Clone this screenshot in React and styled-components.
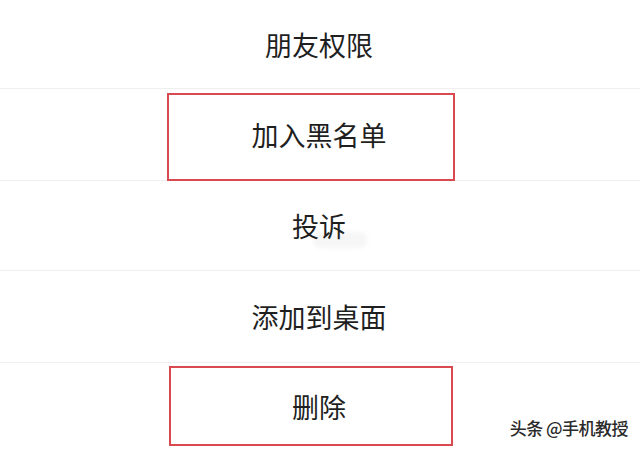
import styled, { createGlobalStyle } from "styled-components";

const GlobalStyle = createGlobalStyle`
  html, body {
    margin: 0;
    padding: 0;
    background: #ffffff;
  }
  body {
    font-family: "Noto Sans CJK SC", "Noto Sans", sans-serif;
  }
`;

const Sheet = styled.div`
  width: 640px;
  height: 450px;
  overflow: hidden;
  position: relative;
  background: #fff;
  display: flex;
  flex-direction: column;
`;

const Row = styled.div`
  position: relative;
  height: ${(p) => p.$h}px;
  flex-shrink: 0;
  display: flex;
  align-items: center;
  justify-content: center;
  border-bottom: ${(p) => (p.$last ? "none" : "1px solid #efefef")};
`;

const Label = styled.span`
  position: relative;
  z-index: 1;
  font-size: 27px;
  line-height: 1;
  color: #1f1f1f;
  margin-left: -2px;
`;

const Mark = styled.div`
  position: absolute;
  left: ${(p) => p.$left}px;
  top: ${(p) => p.$top}px;
  width: ${(p) => p.$w}px;
  height: ${(p) => p.$h}px;
  box-sizing: border-box;
  border: 2px solid #d94a50;
  pointer-events: none;
`;

const Smudge = styled.div`
  position: absolute;
  left: 313px;
  top: 51px;
  width: 54px;
  height: 16px;
  border-radius: 10px;
  background: #f6f6f6;
  filter: blur(2px);
`;

const Watermark = styled.div`
  position: absolute;
  right: 12px;
  bottom: 10px;
  font-size: 17px;
  font-weight: 500;
  color: #2a2a2a;
  letter-spacing: -0.5px;
  text-shadow: 0 0 2px #fff, 0 0 2px #fff;
`;

const items = [
  { text: "朋友权限", h: 88 },
  { text: "加入黑名单", h: 91, mark: { left: 167, top: 4, w: 288, h: 88 } },
  { text: "投诉", h: 89, smudge: true },
  { text: "添加到桌面", h: 91 },
  { text: "删除", h: 87, mark: { left: 169, top: 3, w: 284, h: 80 } },
];

export default function App() {
  return (
    <>
      <GlobalStyle />
      <Sheet>
        {items.map((it, i) => (
          <Row key={it.text} $h={it.h} $last={i === items.length - 1}>
            {it.smudge && <Smudge />}
            <Label>{it.text}</Label>
            {it.mark && (
              <Mark
                $left={it.mark.left}
                $top={it.mark.top}
                $w={it.mark.w}
                $h={it.mark.h}
              />
            )}
          </Row>
        ))}
        <Watermark>头条 @手机教授</Watermark>
      </Sheet>
    </>
  );
}
